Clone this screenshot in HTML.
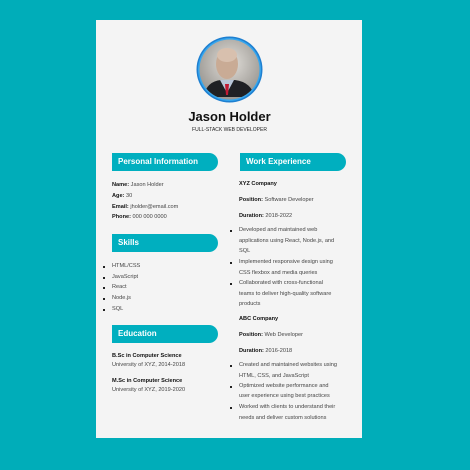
<!DOCTYPE html>
<html><head><meta charset="utf-8"><style>
*{margin:0;padding:0;box-sizing:border-box}
body{width:470px;height:470px;background:#00adb9;position:relative;overflow:hidden;font-family:"Liberation Sans",sans-serif;color:#111}
.card{position:absolute;left:96px;top:20px;width:266px;height:418px;background:#f4f4f4}
.t{position:absolute;white-space:nowrap;font-size:5.6px;color:#444}
.t b{color:#111}
.h{position:absolute;height:18px;width:106px;background:#00afbf;border-radius:0 9px 9px 0;color:#fff;font-size:8px;line-height:18px;padding-left:6px;font-weight:bold}
.d{position:absolute;width:2px;height:2px;background:#222}
</style></head><body>
<div class="card"></div>
<svg style="position:absolute;left:195px;top:35px" width="70" height="70" viewBox="0 0 70 70">
<defs><radialGradient id="g" cx="50%" cy="40%" r="60%"><stop offset="0" stop-color="#e2dfda"/><stop offset="1" stop-color="#8e8b86"/></radialGradient><clipPath id="c"><circle cx="34.5" cy="34.5" r="30"/></clipPath></defs>
<circle cx="34.5" cy="34.5" r="33" fill="#1e7fd0"/>
<circle cx="34.5" cy="34.5" r="31.5" fill="#35a6ee"/>
<g clip-path="url(#c)">
<rect width="70" height="70" fill="url(#g)"/>
<ellipse cx="32" cy="29" rx="11" ry="15" fill="#c9ab95"/>
<ellipse cx="32" cy="20" rx="10" ry="7" fill="#d8c0ae"/>
<path d="M8 62 Q12 46 26 45 L40 45 Q56 47 60 62 Z" fill="#1f2024"/>
<path d="M25 45 L32 58 L39 45 Z" fill="#b9c6d8"/>
<path d="M30 49 L34 49 L33 60 L31 60 Z" fill="#c01a33"/>
</g>
</svg>
<div class="t" style="left:0;width:459px;text-align:center;top:109px;font-size:13px;font-weight:bold;color:#111">Jason Holder</div>
<div class="t" style="left:0;width:459px;text-align:center;top:127px;font-size:5px;color:#222">FULL-STACK WEB DEVELOPER</div>

<div class="h" style="left:112px;top:153px">Personal Information</div>
<div class="h" style="left:240px;top:153px">Work Experience</div>
<div class="t" style="left:112px;top:182px"><b>Name:</b> Jason Holder</div>
<div class="t" style="left:112px;top:193px"><b>Age:</b> 30</div>
<div class="t" style="left:112px;top:204px"><b>Email:</b> jholder@email.com</div>
<div class="t" style="left:112px;top:214px"><b>Phone:</b> 000 000 0000</div>

<div class="h" style="left:112px;top:234px">Skills</div>
<div class="d" style="left:103px;top:266px"></div><div class="t" style="left:112px;top:263px">HTML/CSS</div>
<div class="d" style="left:103px;top:277px"></div><div class="t" style="left:112px;top:274px">JavaScript</div>
<div class="d" style="left:103px;top:287px"></div><div class="t" style="left:112px;top:284px">React</div>
<div class="d" style="left:103px;top:298px"></div><div class="t" style="left:112px;top:295px">Node.js</div>
<div class="d" style="left:103px;top:309px"></div><div class="t" style="left:112px;top:306px">SQL</div>

<div class="h" style="left:112px;top:325px">Education</div>
<div class="t" style="left:112px;top:353px;font-weight:bold;color:#111">B.Sc in Computer Science</div>
<div class="t" style="left:112px;top:362px">University of XYZ, 2014-2018</div>
<div class="t" style="left:112px;top:378px;font-weight:bold;color:#111">M.Sc in Computer Science</div>
<div class="t" style="left:112px;top:387px">University of XYZ, 2019-2020</div>

<div class="t" style="left:239px;top:181px;font-weight:bold;color:#111">XYZ Company</div>
<div class="t" style="left:239px;top:197px"><b>Position:</b> Software Developer</div>
<div class="t" style="left:239px;top:213px"><b>Duration:</b> 2018-2022</div>
<div class="d" style="left:230px;top:230px"></div><div class="t" style="left:239px;top:227px">Developed and maintained web</div>
<div class="t" style="left:239px;top:238px">applications using React, Node.js, and</div>
<div class="t" style="left:239px;top:248px">SQL</div>
<div class="d" style="left:230px;top:262px"></div><div class="t" style="left:239px;top:259px">Implemented responsive design using</div>
<div class="t" style="left:239px;top:270px">CSS flexbox and media queries</div>
<div class="d" style="left:230px;top:283px"></div><div class="t" style="left:239px;top:280px">Collaborated with cross-functional</div>
<div class="t" style="left:239px;top:291px">teams to deliver high-quality software</div>
<div class="t" style="left:239px;top:301px">products</div>
<div class="t" style="left:239px;top:316px;font-weight:bold;color:#111">ABC Company</div>
<div class="t" style="left:239px;top:332px"><b>Position:</b> Web Developer</div>
<div class="t" style="left:239px;top:348px"><b>Duration:</b> 2016-2018</div>
<div class="d" style="left:230px;top:365px"></div><div class="t" style="left:239px;top:362px">Created and maintained websites using</div>
<div class="t" style="left:239px;top:373px">HTML, CSS, and JavaScript</div>
<div class="d" style="left:230px;top:386px"></div><div class="t" style="left:239px;top:383px">Optimized website performance and</div>
<div class="t" style="left:239px;top:393px">user experience using best practices</div>
<div class="d" style="left:230px;top:407px"></div><div class="t" style="left:239px;top:404px">Worked with clients to understand their</div>
<div class="t" style="left:239px;top:415px">needs and deliver custom solutions</div>
</body></html>
